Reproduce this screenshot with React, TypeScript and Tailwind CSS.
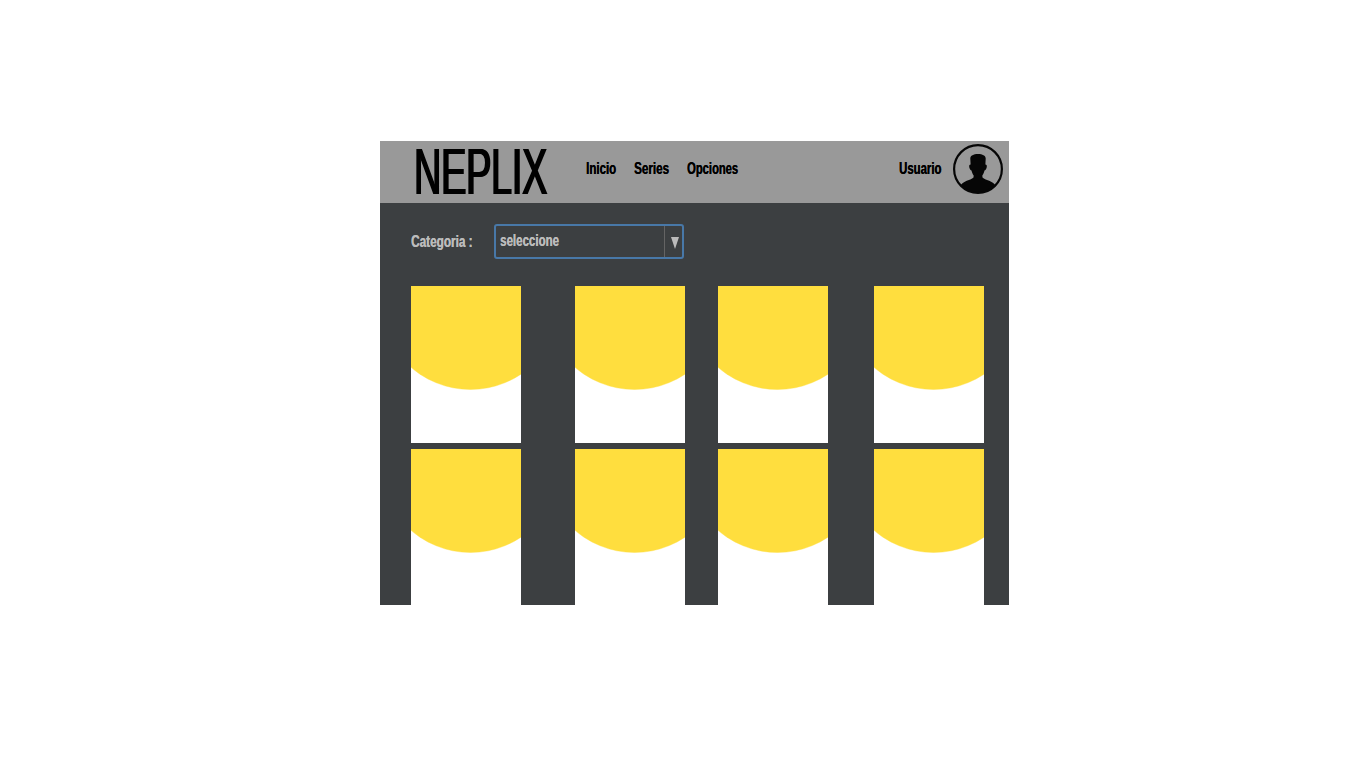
import type { ReactNode } from "react";

function Label({ box, scale, children }: { box: string; scale: string; children: ReactNode }) {
  return (
    <span className={`block shrink-0 ${box}`}>
      <span className={`block w-max origin-left whitespace-nowrap text-[16px] leading-5 font-bold [text-shadow:0.4px_0_0_currentColor] ${scale}`}>
        {children}
      </span>
    </span>
  );
}

function Avatar() {
  return (
    <svg className="mt-[3px] block size-[50px] shrink-0" viewBox="0 0 50 50">
      <defs>
        <clipPath id="avatar">
          <circle cx="25" cy="25" r="24" />
        </clipPath>
      </defs>
      <path
        clipPath="url(#avatar)"
        fill="#060606"
        d="M25 9.900C20.500 9.900 17.300 11.500 17.300 14.500L17.600 20.500C15.900 20.500 16 22.500 16.500 24C16.900 25.600 17.700 26.400 18.500 26.400C19 28.600 19.700 30 20.600 31.300V33.200C19.300 35.200 14.500 36 11 38.200C8.700 39.600 7.500 41 6.500 43V50H43.500V43C42.500 41 41.300 39.600 39 38.200C35.500 36 30.700 35.200 29.400 33.200V31.300C30.300 30 31 28.600 31.500 26.400C32.300 26.400 33.100 25.600 33.500 24C34 22.500 34.100 20.500 32.400 20.500L32.700 14.500C32.700 11.500 29.500 9.900 25 9.900Z"
      />
      <circle cx="25" cy="25" r="23.900" fill="none" stroke="#060606" strokeWidth="2.200" />
    </svg>
  );
}

function Card() {
  return (
    <div className="h-[157px] w-[110px] bg-white">
      <svg className="block h-[157px] w-[110px]" viewBox="0 0 110 157">
        <circle cx="59.500" cy="12.500" r="91" fill="#ffde3e" stroke="#ffde3e" strokeOpacity="0.4" />
      </svg>
    </div>
  );
}

function CardRow() {
  return (
    <div className="flex shrink-0">
      <Card />
      <div className="ml-[54px]"><Card /></div>
      <div className="ml-[33px]"><Card /></div>
      <div className="ml-[46px]"><Card /></div>
    </div>
  );
}

export default function App() {
  return (
    <div className="h-screen w-full overflow-hidden bg-white pt-[141px] pl-[380px] font-['Liberation_Sans',sans-serif]">
      <div className="flex h-[464px] w-[629px] flex-col bg-[#3c3f41]">
        <header className="flex h-[62px] shrink-0 bg-[#999999] pl-[34px] text-black">
          <h1 className="w-[172px] shrink-0">
            <span className="block w-max origin-left scale-x-[0.583] text-[65px] leading-[61px] tracking-[-0.5px] [text-shadow:1.4px_0_0_#000,-1.4px_0_0_#000]">
              NEPLIX
            </span>
          </h1>
          <nav className="flex pt-[18px]">
            <Label box="w-12" scale="scale-x-[0.72]">Inicio</Label>
            <Label box="w-[53px]" scale="scale-x-[0.73]">Series</Label>
            <Label box="w-[52px]" scale="scale-x-[0.7]">Opciones</Label>
          </nav>
          <div className="ml-auto flex pr-1.5">
            <div className="pt-[18px]">
              <Label box="w-[54px]" scale="scale-x-[0.71]">Usuario</Label>
            </div>
            <Avatar />
          </div>
        </header>
        <main className="flex flex-col pl-[31px] text-[#bbbbbb]">
          <div className="flex h-[83px] shrink-0 pt-[21px]">
            <div className="pt-[8px]">
              <Label box="w-[83px]" scale="scale-x-[0.735]">Categoria :</Label>
            </div>
            <div className="flex h-[35px] w-[190px] rounded-[3px] border-2 border-[#4878a8] pl-1">
              <div className="flex-1 pt-[5px]">
                <Label box="w-[60px]" scale="scale-x-[0.72]">seleccione</Label>
              </div>
              <div className="flex w-[18px] justify-center border-l border-[#646464] pt-[11px] pl-[3px]">
                <svg className="block h-3 w-2 shrink-0" viewBox="0 0 8 12">
                  <path d="M0 0h8L4 12Z" fill="#bbbbbb" />
                </svg>
              </div>
            </div>
          </div>
          <div className="flex h-[319px] flex-col gap-1.5 overflow-hidden">
            <CardRow />
            <CardRow />
          </div>
        </main>
      </div>
    </div>
  );
}
